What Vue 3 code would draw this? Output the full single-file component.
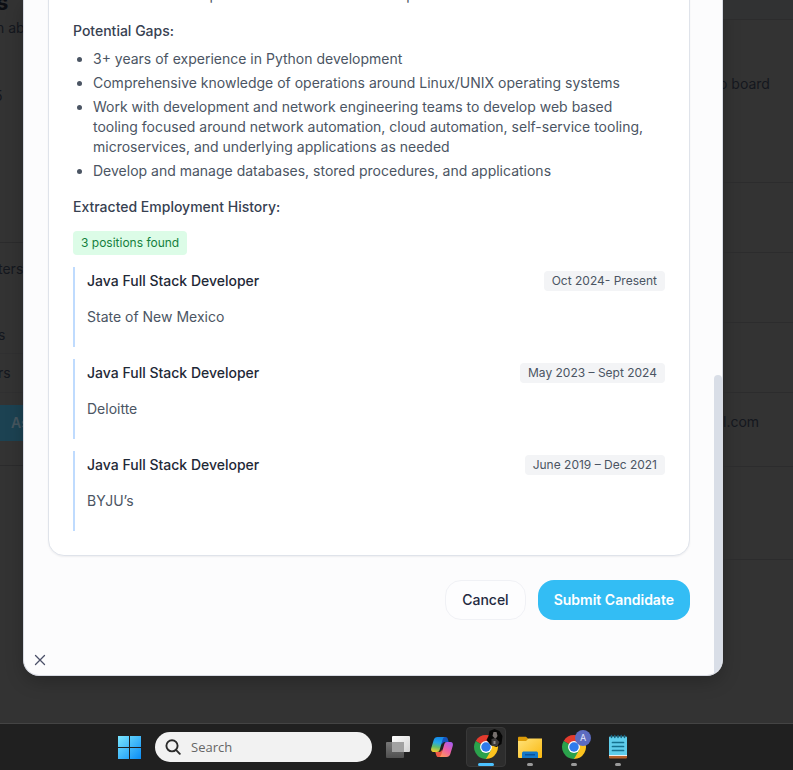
<script setup>
const matches = ['Less Resource experiences on Linux and other platforms.']

const gaps = [
  '3+ years of experience in Python development',
  'Comprehensive knowledge of operations around Linux/UNIX operating systems',
  'Work with development and network engineering teams to develop web based tooling focused around network automation, cloud automation, self-service tooling, microservices, and underlying applications as needed',
  'Develop and manage databases, stored procedures, and applications',
]

const positions = [
  { title: 'Java Full Stack Developer', company: 'State of New Mexico', dates: 'Oct 2024- Present' },
  { title: 'Java Full Stack Developer', company: 'Deloitte', dates: 'May 2023 – Sept 2024' },
  { title: 'Java Full Stack Developer', company: 'BYJU’s', dates: 'June 2019 – Dec 2021' },
]
</script>

<template>
  <div class="screen">
    <div class="stage">
      <aside class="behind behind-left">
        <div class="block intro">
          <strong class="page-title">s</strong>
          <span class="page-sub">n ab</span>
          <span class="page-count">5</span>
        </div>
        <div class="block filters">
          <span class="filter">ters</span>
          <span class="filter short">s</span>
          <span class="filter row">rs</span>
          <button type="button" class="assign">As</button>
        </div>
      </aside>

      <section class="dialog" role="dialog" aria-label="Submit Candidate">
        <div class="dialog-body">
          <article class="card">
            <ul class="points">
              <li v-for="m in matches" :key="m">{{ m }}</li>
            </ul>
            <h3 class="gaps-title">Potential Gaps:</h3>
            <ul class="points">
              <li v-for="g in gaps" :key="g">{{ g }}</li>
            </ul>
            <h3>Extracted Employment History:</h3>
            <span class="found">3 positions found</span>
            <ol class="history">
              <li v-for="p in positions" :key="p.dates" class="position">
                <div class="position-head">
                  <h4>{{ p.title }}</h4>
                  <span class="dates">{{ p.dates }}</span>
                </div>
                <p>{{ p.company }}</p>
              </li>
            </ol>
          </article>
          <div class="actions">
            <button type="button" class="btn cancel">Cancel</button>
            <button type="button" class="btn submit">Submit Candidate</button>
          </div>
          <button type="button" class="close" aria-label="Close">
            <svg width="16" height="16" viewBox="0 0 16 16" fill="none" stroke="#4b5068" stroke-width="1.3" stroke-linecap="round">
              <path d="M3.5 3.5l9 9M12.500 3.500l-9 9" />
            </svg>
          </button>
        </div>
        <div class="scroll-track"><div class="scroll-thumb"></div></div>
      </section>

      <aside class="behind behind-right">
        <div class="cell head"></div>
        <div class="cell board"><span>o board</span></div>
        <div class="cell"></div>
        <div class="cell"></div>
        <div class="cell"></div>
        <div class="cell mail"><span>l.com</span></div>
        <div class="cell last"></div>
      </aside>
    </div>

    <nav class="taskbar">
      <button type="button" class="tile" aria-label="Start">
        <svg width="24" height="24" viewBox="0 0 24 24">
          <defs>
            <linearGradient id="win" gradientUnits="userSpaceOnUse" x1="0" y1="0" x2="24" y2="24">
              <stop offset="0" stop-color="#7feaff" />
              <stop offset="1" stop-color="#0a8cf5" />
            </linearGradient>
          </defs>
          <path fill="url(#win)" d="M1 1h11v11H1zM13 1h11v11H13zM1 13h11v11H1zM13 13h11v11H13z" />
        </svg>
      </button>
      <label class="search">
        <svg width="16" height="16" viewBox="0 0 16 16" fill="none" stroke="#2b2b2b" stroke-width="1.9" stroke-linecap="round">
          <circle cx="7" cy="6.800" r="5.600" />
          <path d="M11.200 11.200l3.600 3.600" />
        </svg>
        <input type="text" placeholder="Search" aria-label="Search" />
      </label>

      <div class="apps">
        <button type="button" class="tile" aria-label="Task view">
          <svg width="26" height="26" viewBox="0 0 26 26">
            <defs>
              <linearGradient id="tv" x1="0" y1="0" x2="1" y2="1">
                <stop offset="0" stop-color="#fff" />
                <stop offset="1" stop-color="#d2d2d2" />
              </linearGradient>
              <linearGradient id="tvb" x1="0" y1="0" x2="0" y2="1">
                <stop offset="0" stop-color="#777" />
                <stop offset="1" stop-color="#505050" />
              </linearGradient>
            </defs>
            <rect x="7" y="2" width="18" height="16" rx="1" fill="url(#tv)" />
            <rect x="1" y="8" width="18" height="16" rx="1" fill="url(#tvb)" />
            <path d="M7 8h12v10H7z" fill="#a2a2a2" />
          </svg>
        </button>

        <button type="button" class="tile" aria-label="Copilot">
          <svg width="24" height="24" viewBox="0 0 24 24">
            <defs>
              <linearGradient id="cpa" x1=".4" y1="0" x2=".2" y2="1">
                <stop offset="0" stop-color="#168ae8" />
                <stop offset=".35" stop-color="#25a7e9" />
                <stop offset=".65" stop-color="#62bd67" />
                <stop offset="1" stop-color="#ffd02c" />
              </linearGradient>
              <linearGradient id="cpb" x1=".8" y1="0" x2=".2" y2="1">
                <stop offset="0" stop-color="#a75cf0" />
                <stop offset=".5" stop-color="#ee5fa3" />
                <stop offset="1" stop-color="#ff985a" />
              </linearGradient>
            </defs>
            <path fill="#1554bd" d="M9 2h6.500c1.400 0 2 .9 2.400 2.300L18.700 7H15c-1.700 0-2.600 1-3.100 2.700z" />
            <path fill="#ef5845" d="M15 22H8.500c-1.400 0-2-.9-2.400-2.300L5.300 17H9c1.700 0 2.600-1 3.100-2.700z" />
            <path fill="url(#cpa)" d="M7.500 2H15c-1.300.2-2 1.200-2.400 2.700L9.800 14.500C9.300 16.200 8.600 17 7 17H3.600C1.400 17 .7 15.300 1.200 13.300L3.700 5C4.300 3 5.500 2 7.500 2z" />
            <path fill="url(#cpb)" d="M16.500 22H9c1.300-.2 2-1.200 2.400-2.700l2.800-9.800C14.700 7.800 15.400 7 17 7h3.400c2.200 0 2.900 1.700 2.400 3.700L20.300 19c-.6 2-1.800 3-3.800 3z" />
          </svg>
        </button>

        <button type="button" class="tile active" aria-label="Chrome">
          <svg width="26" height="26" viewBox="0 0 24 24">
            <path fill="#e33b2e" d="M12 12L2.470 6.500A11 11 0 0 1 21.530 6.500z" />
            <path fill="#2ba24c" d="M12 12L12 23A11 11 0 0 1 2.470 6.500z" />
            <path fill="#fcc31e" d="M12 12L21.530 6.500A11 11 0 0 1 12 23z" />
            <path fill="#2ba24c" d="M7.240 14.750L12 12l4.760 2.750L12 23l-4-2z" />
            <circle cx="12" cy="12" r="5.500" fill="#fff" />
            <circle cx="12" cy="12" r="4.400" fill="#2f7bec" />
          </svg>
          <svg class="avatar" width="17" height="18" viewBox="0 0 16 18">
            <path fill="#070707" d="M3 2L8 0l5 2 3 5-1 8-5 3-6-2-4-5 2-4z" />
            <path fill="#77706e" d="M7 3h3l1 4-2 3-3-3z" />
            <path fill="#3d3a3b" d="M5 10l4-1 4 4-2 4H5z" />
            <path fill="#8f8a8a" d="M7 12h2v3H7z" />
          </svg>
          <span class="running wide"></span>
        </button>

        <button type="button" class="tile" aria-label="File Explorer">
          <svg width="26" height="26" viewBox="0 0 26 26">
            <defs>
              <linearGradient id="fd" x1="0" y1="0" x2="1" y2="1">
                <stop offset="0" stop-color="#ffe27a" />
                <stop offset="1" stop-color="#fbb90f" />
              </linearGradient>
            </defs>
            <path fill="#dc9b08" d="M1 4c0-.8.500-1.300 1.300-1.300H9L11.500 5H24v6H1z" />
            <path fill="url(#fd)" d="M1 7h8l2.500-2.400H25V23a1 1 0 0 1-1 1H2a1 1 0 0 1-1-1z" />
            <path fill="#1378c9" d="M5 24v-4.500c0-1.400.8-2 2-2h12c1.200 0 2 .6 2 2V24z" />
            <path fill="#0b529a" d="M8 20h10v1.500H8z" />
          </svg>
          <span class="running"></span>
        </button>

        <button type="button" class="tile" aria-label="Chrome, profile A">
          <svg width="26" height="26" viewBox="0 0 24 24">
            <path fill="#e33b2e" d="M12 12L2.470 6.500A11 11 0 0 1 21.530 6.500z" />
            <path fill="#2ba24c" d="M12 12L12 23A11 11 0 0 1 2.470 6.500z" />
            <path fill="#fcc31e" d="M12 12L21.530 6.500A11 11 0 0 1 12 23z" />
            <path fill="#2ba24c" d="M7.240 14.750L12 12l4.760 2.750L12 23l-4-2z" />
            <circle cx="12" cy="12" r="5.500" fill="#fff" />
            <circle cx="12" cy="12" r="4.400" fill="#2f7bec" />
          </svg>
          <span class="profile">A</span>
          <span class="running"></span>
        </button>

        <button type="button" class="tile" aria-label="Notepad">
          <svg width="20" height="26" viewBox="0 0 20 26">
            <path fill="#e9edf0" d="M1 19h18v3H1z" />
            <path fill="#b5612c" d="M1 22h18v1.500a1 1 0 0 1-1 1H2a1 1 0 0 1-1-1z" />
            <path fill="#5fcdeb" d="M1 3.500a1 1 0 0 1 1-1h16a1 1 0 0 1 1 1V21H1z" />
            <path stroke="#17617d" stroke-width="1.500" stroke-linecap="round" d="M3.500 1.500v2M6.800 1.500v2M10 1.500v2M13.200 1.500v2M16.500 1.500v2" />
            <path stroke="#14718f" stroke-width="1.700" stroke-linecap="round" d="M4.500 8.500h11M4.500 12.500h11M4.500 16.500h11" />
          </svg>
          <span class="running"></span>
        </button>
      </div>
    </nav>
  </div>
</template>

<style>
body {
  margin: 0;
  background: #333;
}
</style>

<style scoped>
* {
  box-sizing: border-box;
}

.screen {
  display: flex;
  flex-direction: column;
  height: 100vh;
  overflow: hidden;
  background: #333;
  font-family: Inter, "Liberation Sans", sans-serif;
  font-size: 14px;
  line-height: 20px;
}

button {
  font: inherit;
  cursor: pointer;
}

.stage {
  flex: 1;
  min-height: 0;
  display: grid;
  grid-template-columns: 23px minmax(0, 1fr) 70px;
}

.behind {
  overflow: hidden;
  color: #14171e;
  white-space: nowrap;
}

.block {
  display: flex;
  flex-direction: column;
  align-items: flex-start;
  border-bottom: 1px solid #2b2b2c;
}

.intro {
  height: 243px;
}

.page-title {
  height: 18px;
  margin-left: -4px;
  color: #0c0e13;
  font-size: 22px;
  line-height: 4px;
}

.page-sub {
  margin-left: -4px;
}

.page-count {
  margin-top: 48px;
  margin-left: -6px;
}

.filters {
  height: 223px;
  padding-top: 16px;
}

.filter {
  margin-left: -2px;
}

.filter.short {
  margin-top: 46px;
}

.filter.row {
  width: 25px;
  margin-top: 8px;
  padding: 9px 0;
  border-top: 1px solid #303031;
  border-bottom: 1px solid #303031;
}

.assign {
  width: 60px;
  height: 36px;
  margin-top: 12px;
  padding: 0 11px;
  border: 0;
  background: #1c4252;
  color: #46565f;
  font-weight: 600;
  text-align: left;
}

.behind-right .cell {
  height: 70px;
  display: flex;
  align-items: center;
  border-bottom: 1px solid #2c2c2d;
}

.behind-right .head {
  height: 20px;
  background: #313233;
}

.behind-right .board {
  height: 163px;
  padding-bottom: 34px;
}

.behind-right .board span {
  margin-left: -4px;
}

.behind-right .mail {
  height: 74px;
  padding-bottom: 16px;
}

.behind-right .last {
  height: 93px;
}

.dialog {
  display: flex;
  min-height: 0;
  margin-bottom: 47px;
  overflow: hidden;
  border: solid #d8dbe3;
  border-width: 0 1px 1px;
  border-radius: 0 0 16px 16px;
  background: #fcfcfd;
  box-shadow: 0 6px 18px rgba(0, 0, 0, 0.22);
}

.dialog-body {
  flex: 1;
  min-width: 0;
  display: flex;
  flex-direction: column;
  justify-content: flex-end;
  padding: 0 24px 7px;
}

.card {
  flex: none;
  padding: 24px;
  border: 1px solid #dfe3ea;
  border-radius: 16px;
  background: #fff;
  box-shadow: 0 1px 2px rgba(15, 23, 42, 0.06);
}

h3,
h4,
p {
  margin: 0;
}

h3 {
  margin-top: 16px;
  color: #374151;
  font-size: 14px;
  font-weight: 500;
}

.points {
  display: flex;
  flex-direction: column;
  gap: 4px;
  margin: 0;
  padding: 0 8px 0 20px;
  color: #4b5563;
}

.gaps-title + .points {
  margin-top: 8px;
}

.found {
  display: inline-block;
  margin-top: 14px;
  padding: 4px 8px;
  border-radius: 4px;
  background: #dcfce7;
  color: #15803d;
  font-size: 12px;
  line-height: 16px;
  vertical-align: top;
}

.history {
  display: flex;
  flex-direction: column;
  gap: 12px;
  margin: 12px 0 0;
  padding: 0;
  list-style: none;
}

.position {
  display: flex;
  flex-direction: column;
  gap: 16px;
  padding: 4px 0 20px 12px;
  border-left: 2px solid #bfdbfe;
}

.position-head {
  display: flex;
  align-items: center;
  justify-content: space-between;
}

.position h4 {
  color: #1f2937;
  font-size: 14px;
  font-weight: 500;
}

.position p {
  color: #4b5563;
}

.dates {
  padding: 2px 8px;
  border-radius: 4px;
  background: #f3f4f6;
  color: #4b5563;
  font-size: 12px;
  line-height: 16px;
}

.actions {
  display: flex;
  justify-content: flex-end;
  gap: 12px;
  margin-top: 24px;
}

.btn {
  height: 40px;
  padding: 0 16px;
  border: 0;
  border-radius: 16px;
  font-weight: 500;
}

.cancel {
  border: 1px solid #f0f1f5;
  background: #fdfdfe;
  color: #242a40;
}

.submit {
  background: #33bdf4;
  color: #fff;
  font-weight: 600;
}

.close {
  display: grid;
  place-items: center;
  width: 16px;
  height: 16px;
  margin: 32px 0 0 -16px;
  padding: 0;
  border: 0;
  background: none;
}

.scroll-track {
  flex: none;
  display: flex;
  align-items: flex-end;
  width: 8px;
}

.scroll-thumb {
  width: 8px;
  height: 44%;
  min-height: 300px;
  border-radius: 4px 4px 0 0;
  background: #d9dee7;
}

.taskbar {
  flex: none;
  display: flex;
  align-items: center;
  gap: 6px;
  height: 47px;
  padding-left: 109px;
  border-top: 1px solid #444;
  background: #202020;
}

.tile {
  position: relative;
  display: grid;
  place-items: center;
  width: 40px;
  height: 40px;
  padding: 0;
  border: 0;
  border-radius: 4px;
  background: none;
}

.tile.active {
  border: 1px solid #383838;
  background: #2d2d2d;
}

.apps {
  display: flex;
  gap: 4px;
}

.search {
  display: flex;
  align-items: center;
  gap: 10px;
  width: 217px;
  height: 30px;
  padding: 0 10px;
  border-radius: 15px;
  background: #f2f2f2;
}

.search input {
  flex: 1;
  min-width: 0;
  padding: 0;
  border: 0;
  outline: 0;
  background: none;
  font: 13px/20px "Open Sans", "Noto Sans", sans-serif;
}

.search input::placeholder {
  color: #666;
  opacity: 1;
}

.running {
  position: absolute;
  bottom: 1px;
  left: 17px;
  width: 6px;
  height: 3px;
  border-radius: 2px;
  background: #9a9a9a;
}

.running.wide {
  left: 11px;
  bottom: 0;
  width: 16px;
  background: #4cc2ff;
}

.avatar {
  position: absolute;
  top: 1px;
  right: 2px;
}

.profile {
  position: absolute;
  top: 3px;
  right: 3px;
  width: 16px;
  height: 16px;
  border-radius: 50%;
  background: #5c6bc0;
  color: #e4e7fa;
  font-size: 9px;
  line-height: 16px;
  text-align: center;
}
</style>
